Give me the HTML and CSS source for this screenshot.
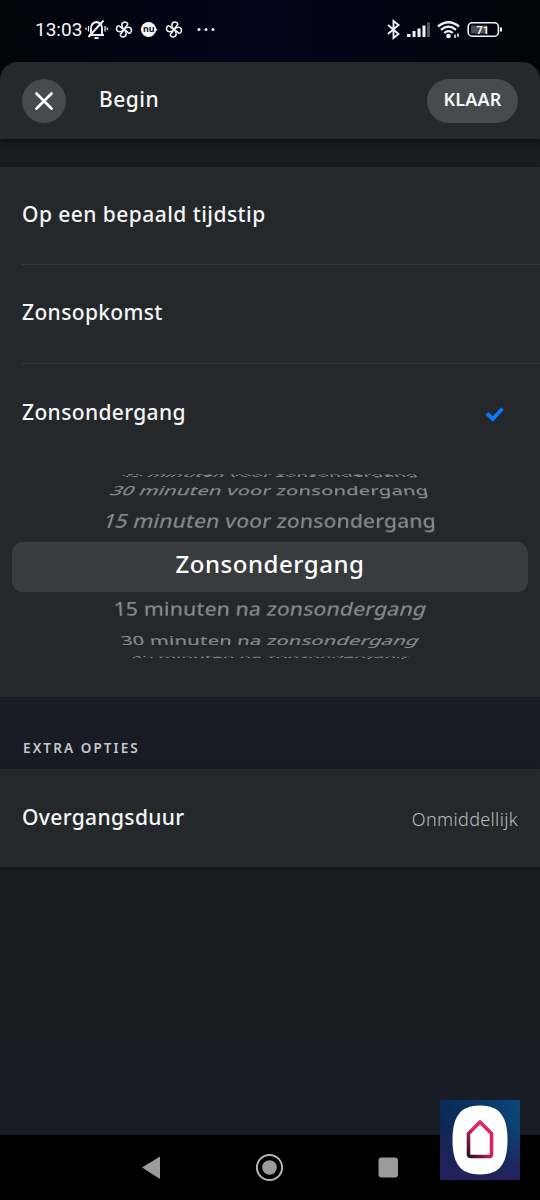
FILE: index.html
```html
<!DOCTYPE html>
<html lang="nl">
<head>
<meta charset="utf-8">
<title>Begin</title>
<link rel="stylesheet" href="styles.css">
</head>
<body>
<div class="phone">
  <div class="top">
  <div class="status">
    <span class="clock">13:03</span>
    <svg class="status-left" width="132" height="24" viewBox="85 18 132 24" fill="none" stroke="#f1f2f6" stroke-width="1.6">
      <path d="M91 34.500V28Q91 23 96.500 22Q102 23 102 28V34.500M89 35H104M103.500 20.500L88.500 37" stroke-width="1.900"/>
      <path d="M94.500 38H98.500" stroke-width="2"/>
      <path d="M88.500 26V31.500M86 27.500V30M105 26V31.500M107.200 27.500V30" stroke-width="1.200"/>
      <g id="fan" stroke-width="1.600" stroke-linejoin="round">
        <path d="M124 29.500C121 27 121 22.500 124.500 22C128 22 128.500 24.500 126.500 26Z"/>
        <path d="M124 29.500C126.500 26.500 131 26.500 131.500 30C131.500 33.500 129 34 127.500 32Z"/>
        <path d="M124 29.500C127 32 127 36.500 123.500 37C120 37 119.500 34.500 121.500 33Z"/>
        <path d="M124 29.500C121.500 32.500 117 32.500 116.500 29C116.500 25.500 119 25 120.500 27Z"/>
      </g>
      <use href="#fan" x="50"/>
      <circle cx="148.500" cy="29.500" r="7.600" fill="#f7f7fa" stroke="none"/>
      <path d="M155 27.500L157.500 29.500L155 32Z" fill="#f7f7fa" stroke="none"/>
      <text x="143" y="32.300" class="nu">nu</text>
      <g fill="#f1f2f6" stroke="none"><circle cx="199" cy="29.500" r="1.500"/><circle cx="206" cy="29.500" r="1.500"/><circle cx="213" cy="29.500" r="1.500"/></g>
    </svg>
    <svg class="status-right" width="118" height="24" viewBox="385 18 118 24" fill="none" stroke="#f1f2f6">
      <path d="M388 25L398.500 34L393.500 38V21L398.500 25L388 34" stroke-width="1.900"/>
      <g fill="#f1f2f6" stroke="none">
        <rect x="407" y="34" width="3.500" height="3"/><rect x="412.500" y="31" width="3" height="6"/><rect x="417.500" y="28.500" width="3" height="8.500"/><rect x="422.500" y="25.500" width="3" height="11.500"/>
        <rect x="427" y="22.500" width="3" height="14.500" fill="#54565e"/>
        <circle cx="448.500" cy="36" r="2.300"/>
      </g>
      <path d="M438 26.500Q448.500 18 459 26.500" stroke-width="2.300"/>
      <path d="M441 29.800Q448.500 23.500 456 29.800M444.200 33Q448.500 29.200 452.800 33" stroke-width="2.200"/>
      <path d="M455 34.500V38M458 33.500V37" stroke-width="1.500"/>
      <rect x="468.200" y="22.800" width="30.200" height="13.400" rx="4" stroke-width="1.600"/>
      <rect x="471" y="25.500" width="16" height="8" rx="1" fill="#4c4e54" stroke="none"/>
      <path d="M501 27.500V31.500" stroke-width="2"/>
      <text x="476.500" y="33.500" class="battery">71</text>
    </svg>
  </div>
  <header class="header">
    <button class="close" aria-label="Sluiten"><svg width="20" height="20" viewBox="0 0 20 20"><path d="M2.500 2.500L17.500 17.500M17.500 2.500L2.500 17.500" stroke="#fff" stroke-width="2.700" stroke-linecap="round"/></svg></button>
    <h1>Begin</h1>
    <button class="done">KLAAR</button>
  </header>
  </div>
  <section class="card options">
    <div class="option first"><span>Op een bepaald tijdstip</span></div>
    <div class="option"><span>Zonsopkomst</span></div>
    <div class="option chosen"><span>Zonsondergang</span>
      <svg width="20" height="18" viewBox="0 0 20 18"><path d="M2 8.500L7.800 14L17.500 3.500" fill="none" stroke="#0878fa" stroke-width="3.800"/></svg>
    </div>
    <div class="wheel">
      <div class="tick before far"><span>45 minuten voor zonsondergang</span></div>
      <div class="tick before mid"><span>30 minuten voor zonsondergang</span></div>
      <div class="tick before near"><span>15 minuten voor zonsondergang</span></div>
      <div class="tick selected"><span>Zonsondergang</span></div>
      <div class="tick after near"><span>15 minuten na zonsondergang</span></div>
      <div class="tick after mid"><span>30 minuten na zonsondergang</span></div>
      <div class="tick after far"><span>45 minuten na zonsondergang</span></div>
    </div>
  </section>
  <h2>EXTRA OPTIES</h2>
  <section class="card duration"><span class="label">Overgangsduur</span><span class="value">Onmiddellijk</span></section>
  <nav class="nav">
    <svg width="540" height="65" viewBox="0 1135 540 65" fill="#9b9b9b">
      <path d="M142 1167.500L160 1156.500V1179Z"/>
      <circle cx="269.500" cy="1167.500" r="12.600" fill="none" stroke="#b4b4b4" stroke-width="2"/><circle cx="269.500" cy="1167.500" r="7.300"/>
      <rect x="378.500" y="1157.500" width="19.500" height="20" rx="3"/>
    </svg>
  </nav>
  <svg class="badge" width="80" height="80" viewBox="0 0 80 80">
    <defs>
      <linearGradient id="sky" x1="0" y1="0.200" x2="1" y2="0"><stop offset="0" stop-color="#0b2853"/><stop offset="1" stop-color="#0a477b"/></linearGradient>
      <linearGradient id="dusk" x1="0" y1="0" x2="0" y2="1"><stop offset="0.300" stop-color="#25205b" stop-opacity="0"/><stop offset="1" stop-color="#25205b"/></linearGradient>
      <linearGradient id="house" x1="0" y1="1" x2="0.500" y2="0.400"><stop offset="0" stop-color="#251026"/><stop offset="1" stop-color="#e02460"/></linearGradient>
    </defs>
    <rect width="80" height="80" fill="url(#sky)"/><rect width="80" height="80" fill="url(#dusk)"/>
    <path d="M40 5.500C60 5.500 67.500 17 67.500 40S60 74.500 40 74.500S12.500 63 12.500 40S20 5.500 40 5.500Z" fill="#fff"/>
    <path d="M40 22L51.500 33.500V54Q51.500 56.500 49 56.500H31Q28.500 56.500 28.500 54V33.500Z" fill="none" stroke="url(#house)" stroke-width="3.600" stroke-linejoin="round"/>
  </svg>
</div>
</body>
</html>
```
FILE: styles.css
```css
* { box-sizing: border-box; }
body { margin: 0; background: #181c21; font-family: "Noto Sans", "Open Sans", sans-serif; font-weight: 500; color: #f5f6f7; }
.phone { position: relative; display: flex; flex-direction: column; height: 1200px; overflow: hidden; background: linear-gradient(#191d20 890px, #181c25 1135px); }
.top { background: linear-gradient(90deg, #010409, #03041a 48%, #010409); position: relative; }
.status { height: 62px; display: flex; align-items: flex-start; padding: 18px 37px 0 35px; }
.clock { width: 50px; font: 400 19px/24px Roboto, sans-serif; white-space: nowrap; }
.status-right { margin-left: auto; }
.nu { font: 700 9px "Noto Sans", sans-serif; fill: #171b26; stroke: none; }
.battery { font: 700 11px Roboto, sans-serif; fill: #f5f6f7; stroke: none; }
.header { height: 77px; display: flex; align-items: center; padding: 0 22px; border-radius: 18px 18px 0 0; background: #26292c; box-shadow: 0 3px 7px #0b0d0f; }
button { border: 0; padding: 0; color: #f5f6f7; background: #484b4d; }
.close { width: 44px; height: 44px; border-radius: 50%; display: grid; place-items: center; }
h1 { margin: 0 auto 4px 33px; font-size: 21px; line-height: 28px; font-weight: 500; letter-spacing: 0.5px; }
.done { width: 91px; height: 44px; border-radius: 22px; font: 600 18px/41px "Noto Sans", sans-serif; letter-spacing: 0.2px; padding-bottom: 3px; }
.card { background: #25282b; box-shadow: 0 1px 3px #0c0f12; }
.options { margin-top: 28px; height: 530px; }
.option { height: 99px; margin-left: 22px; padding-bottom: 4px; border-bottom: 1px solid #373b3d; display: flex; align-items: center; font-size: 21px; letter-spacing: 0.36px; }
.option.first { height: 98px; letter-spacing: 0.45px; }
.option.chosen { border: 0; justify-content: space-between; padding-right: 35px; }
.option svg { margin-top: 4px; }
.wheel { padding: 5px 12px 0; }
.tick { display: flex; align-items: center; justify-content: center; white-space: nowrap; font-size: 22px; line-height: 30px; color: #86898b; }
.tick span { display: block; }
.before.far { height: 13px; }
.before.mid { height: 18px; }
.before.near { height: 43px; padding-bottom: 1px; }
.selected { height: 50px; padding-bottom: 6px; border-radius: 11px; background: #393c3e; color: #fff; font-size: 24px; letter-spacing: 0.55px; }
.after.near { height: 34px; padding-bottom: 2px; }
.after.mid { height: 28px; }
.after.far { height: 6px; }
.before.near span { transform: perspective(480px) rotateX(30deg) scaleX(0.963) skewX(-7deg); }
.before.mid span { transform: perspective(480px) rotateX(54deg) scaleX(0.918) skewX(-8deg); }
.before.far span { transform: perspective(480px) rotateX(80deg) scaleX(0.855) skewX(-8deg); }
.after.near span { transform: perspective(480px) rotateX(-30deg) scaleX(0.971) skewX(-7deg); }
.after.mid span { transform: perspective(480px) rotateX(-54deg) scaleX(0.926) skewX(-8deg); }
.after.far span { transform: perspective(480px) rotateX(-81deg) scaleX(0.86) skewX(-8deg); }
h2 { margin: 0; height: 72px; padding: 41px 0 0 23px; font-size: 13.5px; line-height: 20px; font-weight: 600; letter-spacing: 2.1px; color: #c5c7cb; background: #181b24; }
.duration { height: 98px; padding: 0 22px 3px; display: flex; align-items: center; justify-content: space-between; }
.label { font-size: 21px; letter-spacing: 0.36px; }
.value { font-size: 18px; font-weight: 300; letter-spacing: 0.35px; color: #b9bbbd; padding-top: 4px; }
.nav { margin-top: auto; height: 65px; background: #000; }
.nav svg { display: block; }
.badge { position: absolute; right: 20px; bottom: 20px; }
```
